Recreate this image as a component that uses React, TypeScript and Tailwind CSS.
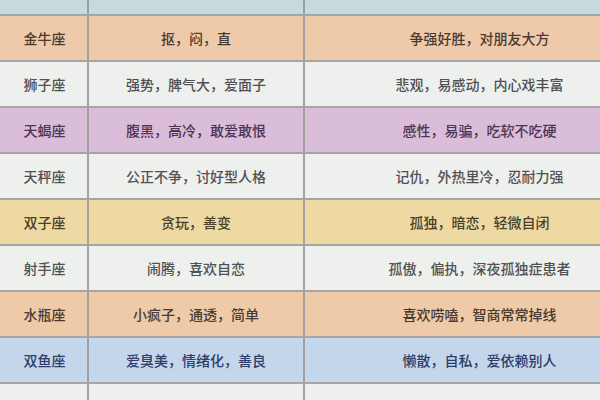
const rows = [
  {
    sign: "金牛座",
    trait: "抠，闷，直",
    note: "争强好胜，对朋友大方",
    bg: "bg-[#efcaaa]",
    text: "text-[#4a3b32]",
  },
  {
    sign: "狮子座",
    trait: "强势，脾气大，爱面子",
    note: "悲观，易感动，内心戏丰富",
    bg: "bg-[#eef0ee]",
    text: "text-[#4f5052]",
  },
  {
    sign: "天蝎座",
    trait: "腹黑，高冷，敢爱敢恨",
    note: "感性，易骗，吃软不吃硬",
    bg: "bg-[#d9bdd9]",
    text: "text-[#4d3457]",
  },
  {
    sign: "天秤座",
    trait: "公正不争，讨好型人格",
    note: "记仇，外热里冷，忍耐力强",
    bg: "bg-[#eef0ee]",
    text: "text-[#505255]",
  },
  {
    sign: "双子座",
    trait: "贪玩，善变",
    note: "孤独，暗恋，轻微自闭",
    bg: "bg-[#efd9a2]",
    text: "text-[#4a4128]",
  },
  {
    sign: "射手座",
    trait: "闹腾，喜欢自恋",
    note: "孤傲，偏执，深夜孤独症患者",
    bg: "bg-[#eef0ee]",
    text: "text-[#505255]",
  },
  {
    sign: "水瓶座",
    trait: "小疯子，通透，简单",
    note: "喜欢唠嗑，智商常常掉线",
    bg: "bg-[#eecaa8]",
    text: "text-[#4a3b32]",
  },
  {
    sign: "双鱼座",
    trait: "爱臭美，情绪化，善良",
    note: "懒散，自私，爱依赖别人",
    bg: "bg-[#c3d6ec]",
    text: "text-[#2f3d68]",
  },
];

export default function App() {
  return (
    <div
      className="w-[600px] h-[400px] overflow-hidden bg-[#eef0ee] text-[14px] font-medium"
      style={{ fontFamily: '"Noto Sans CJK SC", "Noto Sans", sans-serif' }}
    >
      {/* Header strip, cut off at the top */}
      <div className="flex h-[16px] bg-[#c6d9dd] border-b-2 border-[#9fa6a8]">
        <div className="w-[89px] border-r-2 border-[#98a0a2]" />
        <div className="w-[216px] border-r-2 border-[#98a0a2]" />
        <div className="flex-1" />
      </div>

      {rows.map((row) => (
        <div
          key={row.sign}
          className={`flex h-[46px] border-b-2 border-[#a8a6a5] ${row.bg} ${row.text}`}
        >
          <div className="flex w-[89px] items-center justify-center border-r-2 border-[#a3a1a0] pl-[2px]">
            {row.sign}
          </div>
          <div className="flex w-[216px] items-center justify-center border-r-2 border-[#a3a1a0]">
            {row.trait}
          </div>
          <div className="flex flex-1 items-center justify-center pl-[54px]">
            {row.note}
          </div>
        </div>
      ))}

      {/* Next row, cut off at the bottom */}
      <div className="flex h-[20px] bg-[#eef0ee]">
        <div className="w-[89px] border-r-2 border-[#a3a1a0]" />
        <div className="w-[216px] border-r-2 border-[#a3a1a0]" />
        <div className="flex-1" />
      </div>
    </div>
  );
}
